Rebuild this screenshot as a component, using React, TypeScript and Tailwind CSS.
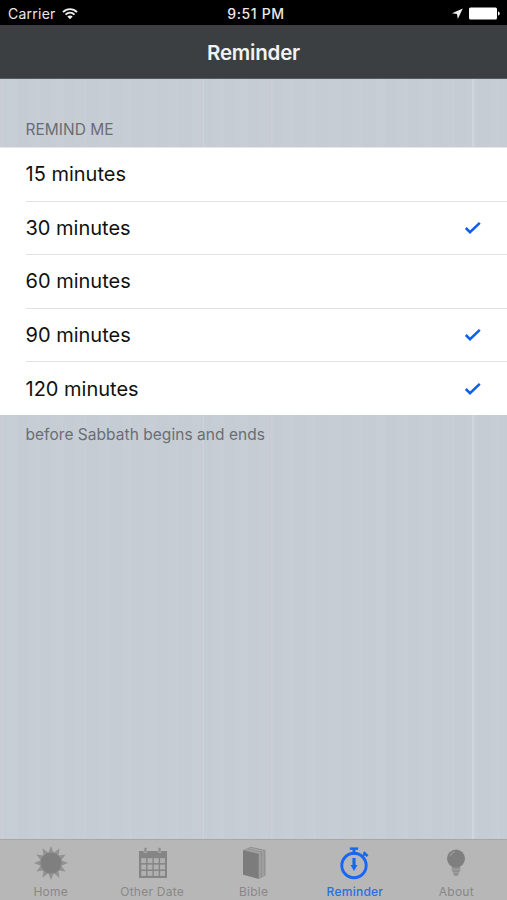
import type { ReactNode } from "react";

const STRIPES =
  "bg-[linear-gradient(90deg,#c9cdd6_0_4px,transparent_4px_98px,#c8cbd3_98px_99px,transparent_99px_138px,#c9ccd4_138px_140px,transparent_140px_201px,#c6c8d1_201px_202px,#ccd0d8_202px_204px,transparent_204px_269px,#c5c8d1_269px_270px,#cacdd6_270px_273px,transparent_273px_472px,#d1d5dd_472px_474px,transparent_474px),repeating-linear-gradient(90deg,#c5ccd4_0_7px,#c7cdd5_7px_11px,#c6cdd5_11px_15px,#c8ced6_15px_17px,#c5ccd4_17px_23px)]";

const ROWS = [
  { label: "15 minutes", checked: false },
  { label: "30 minutes", checked: true },
  { label: "60 minutes", checked: false },
  { label: "90 minutes", checked: true },
  { label: "120 minutes", checked: true },
];

function Wifi() {
  return (
    <svg width="16" height="12" viewBox="0 0 16 12" fill="none" stroke="#eee" strokeWidth="1.9">
      <path d="M1 4.1C5 .1 11 .1 15 4.1" />
      <path d="M3.5 6.6c2.6-2.5 6.4-2.5 9 0" />
      <path d="M8 11.3 5.3 8.6c1.6-1.5 3.8-1.5 5.4 0Z" fill="#eee" stroke="none" />
    </svg>
  );
}

function Check() {
  return (
    <svg width="18" height="14" viewBox="0 0 18 14" fill="none" stroke="#0b5fe8" strokeWidth="2.5">
      <path d="M1.8 7 6 11.2 15.8 1.8" />
    </svg>
  );
}

function Sun() {
  const points = Array.from({ length: 24 }, (_, i) => {
    const a = (i * Math.PI) / 12;
    const r = i % 2 ? 10.6 : 17;
    return `${17 + r * Math.sin(a)},${17 - r * Math.cos(a)}`;
  }).join(" ");
  return (
    <svg width="34" height="34" viewBox="0 0 34 34">
      <polygon points={points} fill="#929292" />
      <circle cx="17" cy="17" r="10.5" fill="#7f7f7f" />
    </svg>
  );
}

function Calendar() {
  return (
    <svg width="30" height="34" viewBox="0 0 30 34" className="ml-[2px]">
      <path d="M1 5h28v27H1z" fill="#858585" />
      <path d="M6 1.5h3v5H6zM20 1.5h3v5h-3z" fill="#909090" stroke="#b5b5b5" strokeWidth=".6" />
      <g fill="#b0b0b0">
        {[12.2, 18.6, 25].map((y) =>
          [3.2, 9.5, 15.8, 22.1].map((x) => <rect key={`${x}-${y}`} x={x} y={y} width="4.9" height="4.9" />),
        )}
      </g>
    </svg>
  );
}

function Book() {
  return (
    <svg width="26" height="34" viewBox="0 0 26 34">
      <path d="M2 4 10 .8 24.5 4v25.5L18 33 2 28.8Z" fill="#929292" />
      <path d="M2 4.5 17.5 8v24.7L2 28.5Z" fill="#7c7c7c" />
      <path d="m4.5 3.4 14.5 3.4v25M8.5 2.2 22 5.2v25" fill="none" stroke="#adadad" strokeWidth=".9" />
    </svg>
  );
}

function Stopwatch() {
  return (
    <svg width="30" height="34" viewBox="0 0 30 34" fill="none" stroke="#1668f2" className="mr-[2px]">
      <circle cx="15" cy="19.5" r="12.2" strokeWidth="2.9" />
      <path d="M10.8 2.6h8.4" strokeWidth="2.4" />
      <path d="M15 2.5v6" strokeWidth="3" />
      <path d="m23.5 10.5 3-3" strokeWidth="2" />
      <path d="m24.6 6.2 4 4" strokeWidth="2.5" />
      <path d="M15 12v9" strokeWidth="3.2" />
      <path d="M11.5 19h7L15 25Z" fill="#1668f2" stroke="none" />
    </svg>
  );
}

function Bulb() {
  return (
    <svg width="20" height="34" viewBox="0 0 20 34">
      <path d="M5.8 19h8.4v5.5L11.5 30h-3l-2.7-5.5Z" fill="#919191" />
      <circle cx="10" cy="12.6" r="9" fill="#7f7f7f" />
      <path d="M4.2 10.3c.7-2.5 2.2-4 4.6-4.8" stroke="#989898" strokeWidth="1.3" fill="none" />
      <path d="M6 23.5h8M7.2 26.5h5.6" stroke="#a5a5a5" strokeWidth=".7" />
    </svg>
  );
}

function Tab({ icon, label, active = false }: { icon: ReactNode; label: string; active?: boolean }) {
  return (
    <div className="flex flex-1 flex-col items-center pt-[6px]">
      <div className="flex h-[34px] items-center">{icon}</div>
      <span
        className={`mt-[4px] text-[12px] leading-[15px] tracking-[0.25px] whitespace-nowrap ${
          active ? "font-medium text-[#2570e8]" : "text-[#888]"
        }`}
      >
        {label}
      </span>
    </div>
  );
}

export default function App() {
  return (
    <div className={`flex h-[900px] w-[507px] flex-col overflow-hidden font-[Inter,sans-serif] ${STRIPES}`}>
      <div className="grid h-[25px] shrink-0 grid-cols-3 items-center bg-black pt-[2px] text-[14px] text-[#e8e8e8]">
        <div className="flex items-center gap-[6px] pl-[8px]">
          <span className="tracking-[0.25px]">Carrier</span>
          <Wifi />
        </div>
        <div className="pl-[5px] text-center text-[14px] font-medium tracking-[0.65px]">9:51 PM</div>
        <div className="flex items-center justify-end gap-[6px] pr-[7px]">
          <svg width="11" height="11" viewBox="0 0 11 11" fill="#eee">
            <path d="M10.8.4 0 5.2l5 .9.8 4.8Z" />
          </svg>
          <svg width="31" height="13" viewBox="0 0 31 13" fill="#fff">
            <rect x="0" y=".5" width="28" height="12" rx="1.5" />
            <path d="M29 4.5c2.3.5 2.3 3.5 0 4Z" />
          </svg>
        </div>
      </div>
      <header className="flex h-[54px] shrink-0 items-center justify-center border-b border-[#555b62] bg-[#3c3f41] pt-[3px]">
        <h1 className="text-[20.5px] font-semibold tracking-[-0.2px] text-[#f3f3f3]">Reminder</h1>
      </header>
      <main className="flex-1">
        <h2 className="h-[68px] pt-[41px] pl-[25.5px] text-[15.5px] leading-[20px] text-[#6a6d74]">REMIND ME</h2>
        <ul className="h-[268px] border-t border-[#e3e6ea] bg-white">
          {ROWS.map((row, i) => (
            <li key={row.label} className="h-[53.6px] pl-[25.5px]">
              <div
                className={`flex h-full items-center justify-between pr-[25px] ${
                  i < ROWS.length - 1 ? "border-b border-[#e2e2e5]" : ""
                }`}
              >
                <span className="text-[20px] text-[#111]">{row.label}</span>
                {row.checked && <Check />}
              </div>
            </li>
          ))}
        </ul>
        <p className="pt-[9px] pl-[25.5px] text-[15.5px] leading-[22px] tracking-[0.04px] text-[#6a6d74]">
          before Sabbath begins and ends
        </p>
      </main>
      <nav className="flex h-[61px] shrink-0 border-t border-[#a5a7aa] bg-[#b7b7b7]">
        <Tab icon={<Sun />} label="Home" />
        <Tab icon={<Calendar />} label="Other Date" />
        <Tab icon={<Book />} label="Bible" />
        <Tab icon={<Stopwatch />} label="Reminder" active />
        <Tab icon={<Bulb />} label="About" />
      </nav>
    </div>
  );
}
